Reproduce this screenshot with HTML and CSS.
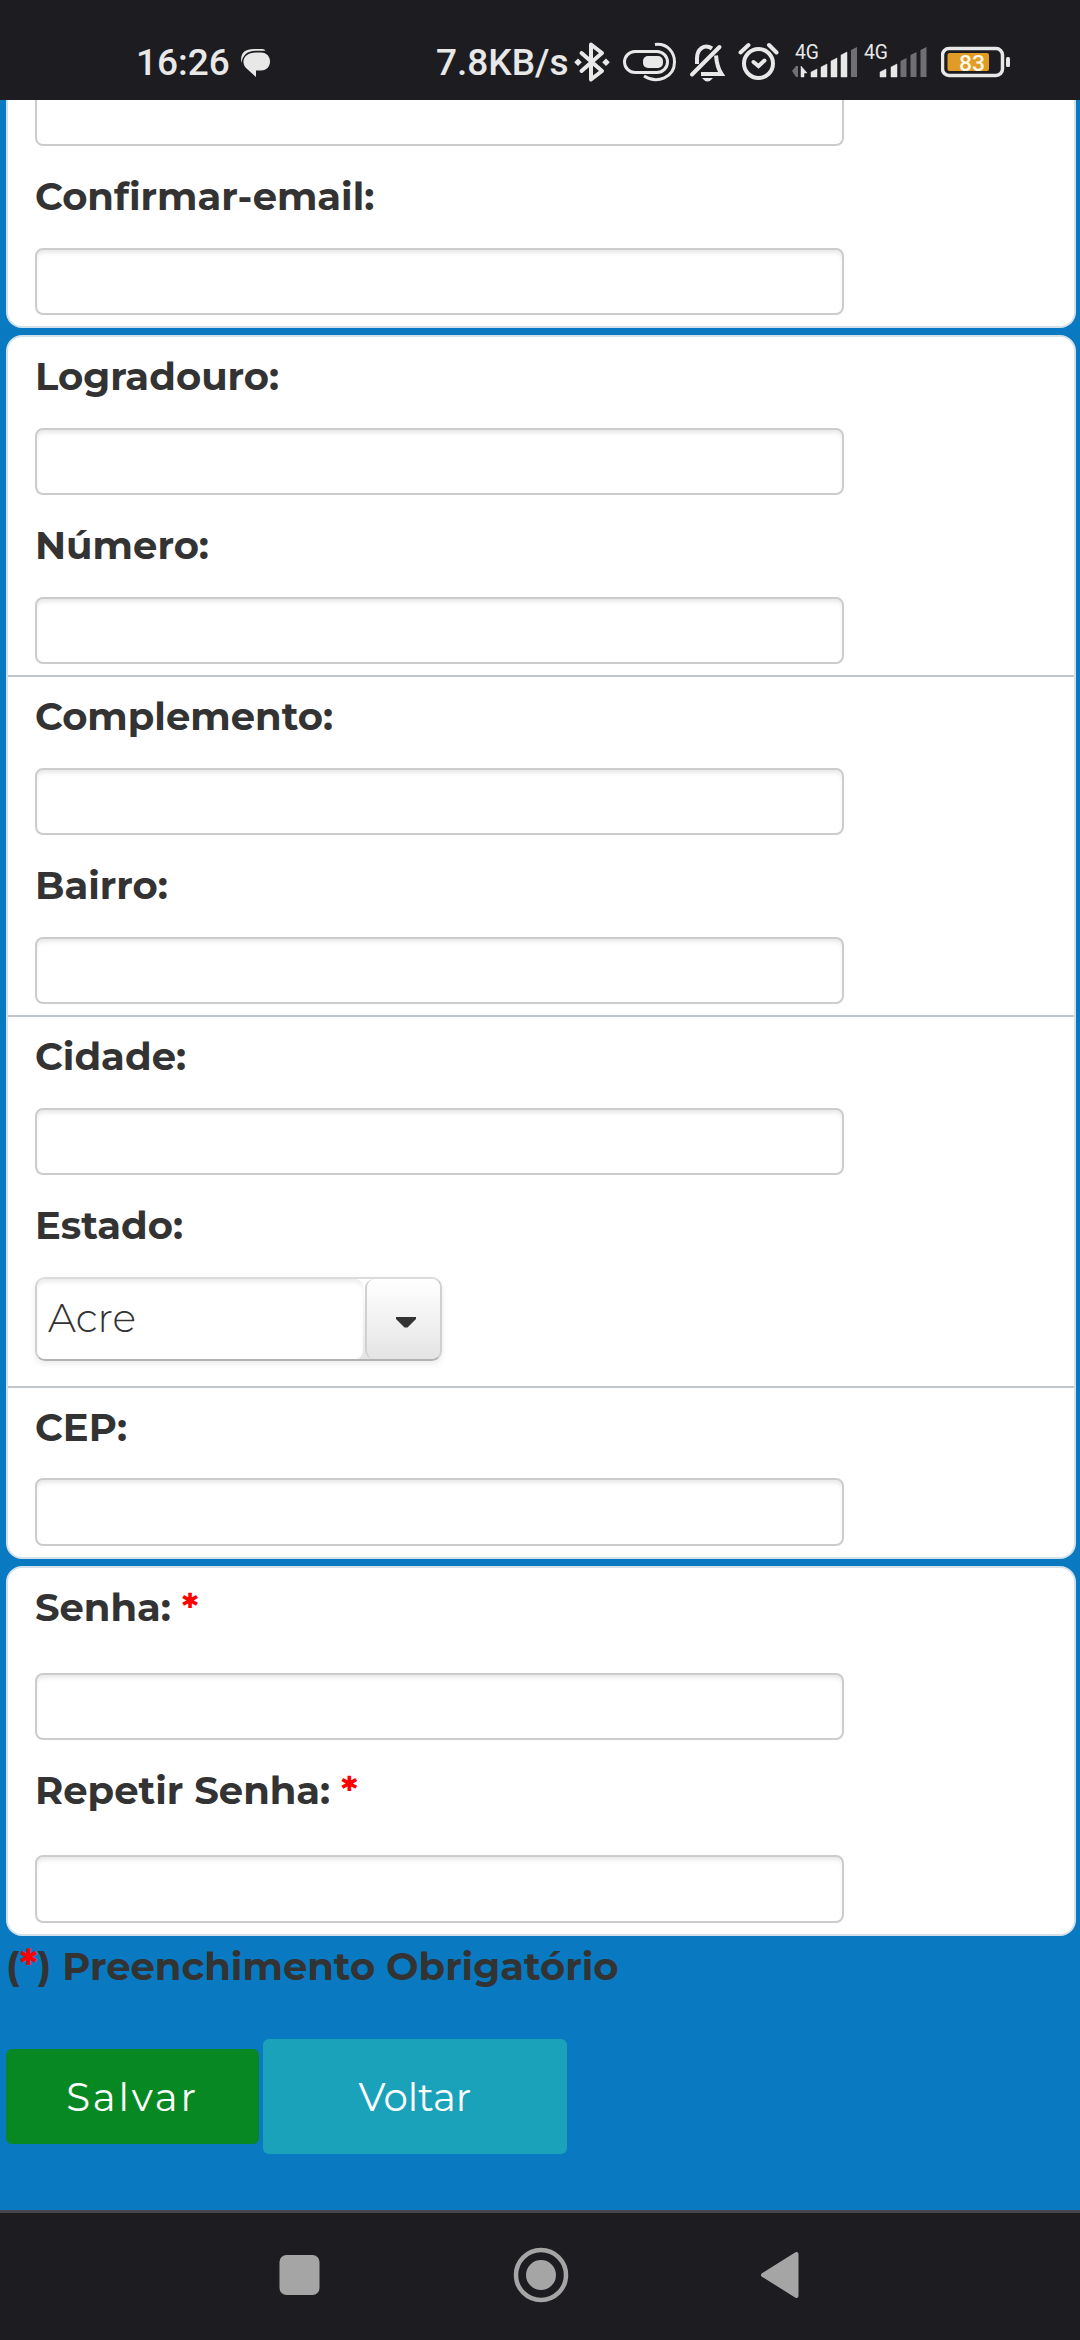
FILE: index.html
```html
<!DOCTYPE html>
<html lang="pt-BR">
<head>
<meta charset="utf-8">
<title>Cadastro</title>
<link rel="stylesheet" href="styles.css">
</head>
<body>
<header class="status">
  <span class="clock">16:26</span>
  <svg class="chat" width="32" height="100" viewBox="240 0 32 100"><path d="M241.500 63Q239 49 254 49h8.500q2 0 3 1.700h-10Q243 51 241.500 63z" fill="#e8e8e8"/><path d="M256 52.500h5c12 0 12 18 0 18h-5V77l-10-9c-6-7-1-15.500 10-15.500z" fill="#e8e8e8"/></svg>
  <span class="speed">7.8KB/s</span>
  <svg class="bt" width="38" height="100" viewBox="573 0 38 100"><g fill="none" stroke="#e8e8e8" stroke-width="4" stroke-linejoin="round" stroke-linecap="round"><path d="M581.500 53l20.500 18-11 8.500V44.500l11 8.500-20.500 18"/></g><path d="M578 58.500l3.800 3.700-3.800 3.700-3.800-3.700zM606 58.500l3.800 3.700-3.800 3.700-3.800-3.700z" fill="#e8e8e8"/></svg>
  <svg class="capsule" width="54" height="100" viewBox="623 0 54 100"><g fill="none" stroke="#e8e8e8"><rect x="624.500" y="51.500" width="43" height="21" rx="10.500" stroke-width="3"/><path d="M655 44.500C668 43 674.500 53 674.500 62c0 15-17 22.500-30.500 14" stroke-width="3"/></g><rect x="643" y="56" width="20" height="12" rx="5" fill="#e8e8e8"/></svg>
  <svg class="bell" width="36" height="100" viewBox="689 0 36 100"><path d="M719.500 47L692 74.500" stroke="#e8e8e8" stroke-width="4" stroke-linecap="round"/><path d="M712 48.500C704 43 697 50 697 58v6M716 55.500q1 12 5.500 18.500H701" fill="none" stroke="#e8e8e8" stroke-width="4"/><path d="M702 78h11q-5.500 7-11 0z" fill="#e8e8e8"/></svg>
  <svg class="alarm" width="42" height="100" viewBox="738 0 42 100"><g fill="none" stroke="#e8e8e8" stroke-width="4"><circle cx="758.500" cy="63.500" r="14.500"/><path d="M753.500 62l5 4 6-5.500M740.500 52.500l8-7.500M769 45l7.500 7.500" stroke-linecap="round"/></g></svg>
  <svg class="signal" width="68" height="100" viewBox="791 0 68 100"><text x="795" y="59" font-size="21" fill="#e8e8e8" textLength="24" lengthAdjust="spacingAndGlyphs">4G</text><path d="M792 71l4-5h2v11h-2z" fill="#707074"/><path d="M801 66l6 7h-3v4h-3zM811 72l6-3v8h-6zM821 67l6-3v13h-6zM831 61l6-3v19h-6zM841 55l6-3v25h-6z" fill="#e8e8e8" stroke="#e8e8e8" stroke-width=".5"/><path d="M851 50l6-3v30h-6z" fill="#707074"/></svg>
  <svg class="signal2" width="64" height="100" viewBox="864 0 64 100"><text x="864" y="59" font-size="21" fill="#e8e8e8" textLength="24" lengthAdjust="spacingAndGlyphs">4G</text><path d="M880 72l6-3v8h-6zM891 67l6-3v13h-6z" fill="#e8e8e8" stroke="#e8e8e8" stroke-width=".5"/><path d="M900.500 61l6-3v19h-6zM910.500 55l6-3v25h-6zM920.500 50l6-3v30h-6z" fill="#707074"/></svg>
  <svg class="battery" width="70" height="100" viewBox="941 0 70 100"><rect x="942.500" y="48.500" width="60" height="27" rx="6.500" fill="none" stroke="#e8e8e8" stroke-width="3.500"/><rect x="947.500" y="53" width="41.500" height="18" rx="2" fill="#e19c26"/><rect x="1006" y="57" width="4" height="10" rx="1.500" fill="#e8e8e8"/><text x="959" y="70.500" font-size="22" font-weight="500" fill="#fff8e8" textLength="26" lengthAdjust="spacingAndGlyphs">83</text></svg>
</header>
<main class="page">
  <section class="card first">
    <div class="group">
      <div class="input cut"></div>
      <label>Confirmar-email:</label>
      <div class="input"></div>
    </div>
  </section>
  <section class="card">
    <div class="group">
      <label>Logradouro:</label>
      <div class="input"></div>
      <label>Número:</label>
      <div class="input"></div>
    </div>
    <div class="group">
      <label>Complemento:</label>
      <div class="input"></div>
      <label>Bairro:</label>
      <div class="input"></div>
    </div>
    <div class="group state">
      <label>Cidade:</label>
      <div class="input"></div>
      <label>Estado:</label>
      <div class="select"><span class="value">Acre</span><span class="trigger"><svg width="22" height="14" viewBox="0 0 22 14"><path d="M1 1h20v2L12.500 11.500h-3L1 3z" fill="#333"/></svg></span></div>
    </div>
    <div class="group">
      <label>CEP:</label>
      <div class="input tall"></div>
    </div>
  </section>
  <section class="card">
    <div class="group secret">
      <label>Senha: <b>*</b></label>
      <div class="input"></div>
      <label>Repetir Senha: <b>*</b></label>
      <div class="input tall"></div>
    </div>
  </section>
  <p class="note">(<b>*</b>) Preenchimento Obrigatório</p>
  <div class="actions">
    <button class="save">Salvar</button>
    <button class="back">Voltar</button>
  </div>
</main>
<nav class="nav">
  <svg width="41" height="60" viewBox="0 0 41 60"><rect x=".5" y="10" width="40" height="40" rx="7" fill="#a5a5a5"/></svg>
  <svg width="56" height="60" viewBox="0 0 56 60"><circle cx="28" cy="30" r="25" fill="none" stroke="#a5a5a5" stroke-width="4.500"/><circle cx="28" cy="30" r="15" fill="#a5a5a5"/></svg>
  <svg width="38" height="60" viewBox="0 0 38 60"><path d="M2 30L35.500 9v42z" fill="#a5a5a5" stroke="#a5a5a5" stroke-width="4" stroke-linejoin="round"/></svg>
</nav>
</body>
</html>
```
FILE: styles.css
```css
* { box-sizing: border-box; }
body {
  margin: 0;
  width: 1080px;
  height: 2340px;
  overflow: hidden;
  display: flex;
  flex-direction: column;
  background: #097ac1;
  color: #333;
  font-family: Montserrat, Inter, sans-serif;
}
svg { display: block; flex: none; }
.status {
  height: 100px;
  flex: none;
  display: flex;
  background: #1d1c21;
  color: #e8e8e8;
  font-family: Roboto, sans-serif;
  padding-left: 136px;
}
.clock, .speed {
  font-size: 37px;
  font-weight: 500;
  line-height: 44px;
  padding-top: 41px;
  white-space: nowrap;
}
.clock { width: 104px; }
.speed { width: 137px; margin-left: 164px; }
.capsule { margin-left: 12px; }
.bell { margin-left: 12px; }
.alarm { margin-left: 13px; }
.signal { margin-left: 11px; }
.signal2 { margin-left: 5px; }
.battery { margin-left: 13px; }

.page {
  height: 2110px;
  flex: none;
  padding: 0 4px 0 6px;
}
.card {
  background: #fff;
  border: 2px solid #d3e1ea;
  border-radius: 16px;
  margin-bottom: 7px;
}
.card.first {
  border-top: 0;
  border-radius: 0 0 16px 16px;
}
.group { padding: 15px 27px 11px; }
.group + .group { border-top: 2px solid #c0c7cc; }
.first .group { padding-top: 0; }
.group.state { padding-bottom: 25px; }
label {
  display: block;
  width: max-content;
  height: 50px;
  margin-bottom: 26px;
  font-size: 38.500px;
  font-weight: 700;
  line-height: 50px;
  white-space: nowrap;
}
.secret label { margin-bottom: 40px; }
b {
  color: #f00;
  font-weight: 700;
}
.input {
  width: 809px;
  height: 67px;
  border: 2px solid #ccc;
  border-radius: 8px;
  background: #fff;
  box-shadow: inset 0 4px 4px -1px rgba(0,0,0,.09);
}
.input + label { margin-top: 26px; }
.input.tall {
  height: 68px;
  margin-top: -1px;
}
.input.cut {
  height: 46px;
  border-top: 0;
  border-radius: 0 0 8px 8px;
  box-shadow: none;
}
.select {
  display: flex;
  justify-content: space-between;
  width: 407px;
  height: 84px;
  border: 2px solid;
  border-color: #dcdcdc #d0d0d0 #b2b2b2 #d0d0d0;
  border-radius: 10px;
  background: linear-gradient(#fff, #e4e4e4);
  box-shadow: 0 3px 6px rgba(0,0,0,.08);
}
.value {
  width: 326px;
  padding-left: 11px;
  border-radius: 8px;
  background: #fff;
  box-shadow: inset 0 4px 4px -1px rgba(0,0,0,.08);
  font-size: 39.500px;
  font-weight: 300;
  line-height: 79px;
}
.trigger {
  width: 75px;
  border-left: 2px solid #d0d0d0;
  border-radius: 9px;
  background: linear-gradient(#fff, #e4e4e4);
  padding: 37px 0 0 28px;
}
.note {
  margin: -1px 0 0;
  height: 50px;
  line-height: 50px;
  font-size: 38.500px;
  font-weight: 700;
}
.note b {
  font-size: 41px;
  line-height: 0;
}
.actions {
  display: flex;
  align-items: center;
  gap: 4px;
  margin-top: 47px;
}
button {
  border: 0;
  border-radius: 6px;
  padding: 0;
  color: #fff;
  font-family: inherit;
  font-size: 38.800px;
  font-weight: 400;
}
.save {
  width: 253px;
  height: 95px;
  background: #078823;
  letter-spacing: 2.800px;
}
.back {
  width: 304px;
  height: 115px;
  background: #19a2ba;
}
.nav {
  height: 130px;
  flex: none;
  display: flex;
  justify-content: space-between;
  border-top: 3px solid #45464e;
  background: #1d1c21;
  padding: 32px 281px 0 279px;
}
```
